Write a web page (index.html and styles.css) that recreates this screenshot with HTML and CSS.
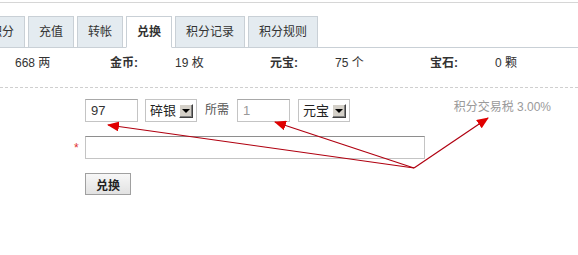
FILE: index.html
```html
<!DOCTYPE html>
<html lang="zh">
<head>
<meta charset="utf-8">
<title>兑换</title>
<link rel="stylesheet" href="styles.css">
</head>
<body>
<div class="page">
  <div class="topline"></div>
  <div class="tabs">
    <div class="tab">积分</div>
    <div class="tab">充值</div>
    <div class="tab">转帐</div>
    <div class="tab active">兑换</div>
    <div class="tab">积分记录</div>
    <div class="tab">积分规则</div>
  </div>
  <div class="info">
    <span class="val">668 两</span>
    <span class="lbl">金币:</span>
    <span class="val">19 枚</span>
    <span class="lbl">元宝:</span>
    <span class="val">75 个</span>
    <span class="lbl">宝石:</span>
    <span class="val">0 颗</span>
  </div>
  <div class="form">
    <div class="row row1">
      <div class="field">97</div>
      <div class="select"><span class="sel-text">碎银</span><span class="sel-btn"><span class="tri"></span></span></div>
      <span class="need">所需</span>
      <div class="field readonly">1</div>
      <div class="select"><span class="sel-text">元宝</span><span class="sel-btn"><span class="tri"></span></span></div>
      <span class="tax">积分交易税 3.00%</span>
    </div>
    <div class="row row2">
      <span class="star">*</span>
      <div class="field wide"></div>
    </div>
    <div class="row row3">
      <button class="btn">兑换</button>
    </div>
  </div>
  <svg class="arrows" width="578" height="255" viewBox="0 0 578 255">
    <defs>
      <marker id="ah" markerWidth="12" markerHeight="10" refX="11" refY="5" orient="auto" markerUnits="userSpaceOnUse">
        <path d="M0,0 L12,5 L0,10 Z" fill="#e00000"/>
      </marker>
    </defs>
    <line x1="414" y1="168" x2="108" y2="125" stroke="#b00010" stroke-width="1.2" marker-end="url(#ah)"/>
    <line x1="414" y1="168" x2="275" y2="122" stroke="#b00010" stroke-width="1.2" marker-end="url(#ah)"/>
    <line x1="414" y1="168" x2="488" y2="118" stroke="#b00010" stroke-width="1.2" marker-end="url(#ah)"/>
  </svg>
</div>
</body>
</html>
```
FILE: styles.css
```css
html, body {
  margin: 0;
  padding: 0;
  background: #fff;
}
body {
  font-family: "Liberation Sans", "Noto Sans CJK SC", sans-serif;
  font-size: 12px;
  color: #333;
  width: 578px;
  height: 255px;
  overflow: hidden;
}
.page {
  position: relative;
  padding-top: 2px;
}
.topline {
  border-top: 1px solid #d6d6d6;
}
.tabs {
  display: flex;
  align-items: flex-end;
  gap: 3px;
  margin-top: 13px;
  margin-left: -21px;
  height: 31px;
  border-bottom: 1px solid #c9d0d6;
}
.tab {
  box-sizing: border-box;
  height: 32px;
  margin-bottom: -1px;
  padding: 0 10px;
  line-height: 30px;
  background: #e4ebf0;
  border: 1px solid #c9d0d6;
  color: #333;
  white-space: nowrap;
}
.tab.active {
  background: #fff;
  border-bottom-color: #fff;
  font-weight: bold;
}
.info {
  display: flex;
  box-sizing: border-box;
  height: 40px;
  padding: 8px 0 0 15px;
  line-height: 14px;
  border-bottom: 1px dashed #cfcfcf;
}
.val {
  width: 95px;
  flex: none;
}
.lbl {
  width: 65px;
  flex: none;
  font-weight: bold;
}
.form {
  padding-left: 74px;
}
.row {
  display: flex;
  align-items: center;
}
.row1 {
  margin-top: 11px;
  padding-left: 11px;
  align-items: flex-start;
}
.row2 {
  margin-top: 14px;
}
.row3 {
  margin-top: 14px;
  padding-left: 11px;
}
.field {
  box-sizing: border-box;
  width: 53px;
  height: 23px;
  border: 1px solid #c4c4c4;
  border-top-color: #a8a8a8;
  padding-left: 5px;
  line-height: 21px;
  font-size: 13px;
  color: #333;
}
.field.readonly {
  color: #999;
}
.field.wide {
  width: 340px;
  border-top-color: #8e8e8e;
}
.select {
  box-sizing: border-box;
  display: flex;
  align-items: center;
  justify-content: space-between;
  width: 52px;
  height: 23px;
  margin-left: 7px;
  border: 1px solid #c4c4c4;
  padding: 0 3px 0 4px;
  font-size: 13px;
  color: #222;
}
.row1 .select:last-of-type {
  margin-left: 8px;
}
.sel-text {
  line-height: 21px;
}
.sel-btn {
  box-sizing: border-box;
  width: 14px;
  height: 14px;
  background: #d4d0c8;
  border: 1px solid;
  border-color: #fff #404040 #404040 #fff;
  box-shadow: inset -1px -1px 0 #808080;
  display: flex;
  align-items: center;
  justify-content: center;
}
.tri {
  width: 0;
  height: 0;
  border-left: 4px solid transparent;
  border-right: 4px solid transparent;
  border-top: 4px solid #000;
  margin-top: 1px;
}
.need {
  margin: 0 8px 0 8px;
  line-height: 23px;
  color: #555;
  font-size: 12px;
}
.tax {
  margin-left: auto;
  margin-right: 27px;
  line-height: 16px;
  color: #9a9a9a;
  font-size: 12px;
}
.star {
  width: 11px;
  color: #e03030;
  font-size: 12px;
  line-height: 12px;
}
.btn {
  box-sizing: border-box;
  width: 46px;
  height: 22px;
  padding: 0;
  border: 1px solid #a0a0a0;
  background: linear-gradient(#f7f7f7, #e2e2e2);
  font-family: "Liberation Sans", "Noto Sans CJK SC", sans-serif;
  font-size: 12px;
  font-weight: bold;
  color: #222;
}
.arrows {
  position: absolute;
  left: 0;
  top: 0;
  pointer-events: none;
}
```
